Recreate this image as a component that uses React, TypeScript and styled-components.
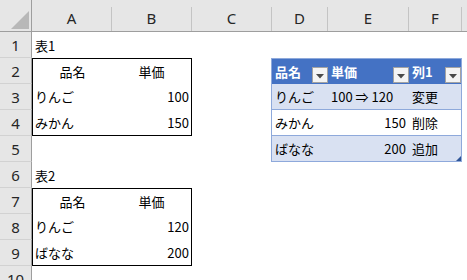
import React from "react";
import styled, { createGlobalStyle } from "styled-components";

const Global = createGlobalStyle`
  html, body { margin: 0; padding: 0; background: #fff; }
  body { font-family: "Noto Sans CJK JP", "Noto Sans", sans-serif; font-size: 13px; color: #000; }
`;

const Sheet = styled.div`
  display: grid;
  grid-template-columns: 32px 80px 80px 80px 56px 81px 53px 1fr;
  grid-template-rows: 32px repeat(10, 26px);
  width: 467px;
  height: 280px;
  overflow: hidden;
  background: #fff;
`;

const Corner = styled.div`
  grid-row: 1;
  grid-column: 1;
  background: #e6e6e6;
  border-right: 1px solid #9e9e9e;
  border-bottom: 1px solid #9e9e9e;
  display: flex;
  align-items: flex-end;
  justify-content: flex-end;
  padding: 0 2px 2px 0;
`;

const ColHead = styled.div`
  grid-row: 1;
  background: #e6e6e6;
  border-bottom: 1px solid #9e9e9e;
  padding-top: 7px;
  display: flex;
`;

const ColLabel = styled.div<{ $last?: boolean }>`
  flex: 1;
  display: flex;
  align-items: center;
  justify-content: center;
  border-right: ${(p) => (p.$last ? "none" : "1px solid #c4c4c4")};
  font-family: "Noto Sans", "Liberation Sans", sans-serif;
  font-size: 15px;
  color: #262626;
  padding-bottom: 2px;
`;

const RowHead = styled.div<{ $row: number }>`
  grid-row: ${(p) => p.$row};
  grid-column: 1;
  background: #e6e6e6;
  border-right: 1px solid #9e9e9e;
  border-bottom: 1px solid #d2d2d2;
  display: flex;
  align-items: center;
  justify-content: center;
  font-family: "Noto Sans", "Liberation Sans", sans-serif;
  font-size: 15px;
  color: #262626;
`;

const Cell = styled.div<{ $row: number; $col: number }>`
  grid-row: ${(p) => p.$row};
  grid-column: ${(p) => p.$col};
  display: flex;
  align-items: center;
  padding: 0 3px;
  white-space: nowrap;
`;

const BoxTable = styled.div<{ $row: number }>`
  grid-row: ${(p) => p.$row} / span 3;
  grid-column: 2 / span 2;
  border: 1px solid #000;
  display: grid;
  grid-template-columns: 79px 1fr;
  grid-template-rows: repeat(3, 1fr);
`;

const BoxCell = styled.div<{ $align: "left" | "center" | "right" }>`
  display: flex;
  align-items: center;
  justify-content: ${(p) =>
    p.$align === "left" ? "flex-start" : p.$align === "right" ? "flex-end" : "center"};
  padding: 0 2px;
  white-space: nowrap;
`;

const ListTable = styled.div`
  grid-row: 3 / span 4;
  grid-column: 5 / span 3;
  margin-left: -1px;
  border: 1px solid #8ea9db;
  display: flex;
  flex-direction: column;
  position: relative;
`;

const ListRow = styled.div<{ $kind: "head" | "band" | "plain"; $line?: boolean }>`
  flex: 1;
  display: grid;
  grid-template-columns: 56px 81px 1fr;
  background: ${(p) => (p.$kind === "head" ? "#4472c4" : p.$kind === "band" ? "#d9e1f2" : "#fff")};
  border-top: ${(p) => (p.$line ? "1px solid #8ea9db" : "none")};
`;

const HeadCell = styled.div`
  display: flex;
  align-items: center;
  justify-content: space-between;
  padding-left: 3px;
  color: #fff;
  font-weight: 700;
  white-space: nowrap;
`;

const FilterButton = styled.div`
  align-self: flex-end;
  width: 16px;
  height: 16px;
  margin-bottom: 1px;
  box-sizing: border-box;
  background: #f4f4f4;
  border: 1px solid #a3a3a3;
  display: flex;
  align-items: center;
  justify-content: center;
  padding-top: 3px;
`;

const ListCell = styled.div<{ $align: "left" | "right" }>`
  display: flex;
  align-items: center;
  justify-content: ${(p) => (p.$align === "right" ? "flex-end" : "flex-start")};
  padding: 0 3px;
  white-space: nowrap;
`;

const ResizeHandle = styled.svg`
  position: absolute;
  right: 0;
  bottom: 0;
`;

const Filter = () => (
  <FilterButton>
    <svg width="8" height="5" viewBox="0 0 8 5">
      <polygon points="0,0 8,0 4,4.5" fill="#4a4a4a" />
    </svg>
  </FilterButton>
);

const cols = ["A", "B", "C", "D", "E", "F", ""];

export default function App() {
  return (
    <>
      <Global />
      <Sheet>
        <Corner>
          <svg width="18" height="18" viewBox="0 0 18 18">
            <polygon points="18,0 18,18 0,18" fill="#b8b8b8" />
          </svg>
        </Corner>
        {cols.map((c, i) => (
          <ColHead key={i}>
            <ColLabel $last={i === cols.length - 1}>{c}</ColLabel>
          </ColHead>
        ))}
        {Array.from({ length: 10 }, (_, i) => (
          <RowHead key={i} $row={i + 2}>
            {i + 1}
          </RowHead>
        ))}

        <Cell $row={2} $col={2}>表1</Cell>
        <BoxTable $row={3}>
          <BoxCell $align="center">品名</BoxCell>
          <BoxCell $align="center">単価</BoxCell>
          <BoxCell $align="left">りんご</BoxCell>
          <BoxCell $align="right">100</BoxCell>
          <BoxCell $align="left">みかん</BoxCell>
          <BoxCell $align="right">150</BoxCell>
        </BoxTable>

        <Cell $row={7} $col={2}>表2</Cell>
        <BoxTable $row={8}>
          <BoxCell $align="center">品名</BoxCell>
          <BoxCell $align="center">単価</BoxCell>
          <BoxCell $align="left">りんご</BoxCell>
          <BoxCell $align="right">120</BoxCell>
          <BoxCell $align="left">ばなな</BoxCell>
          <BoxCell $align="right">200</BoxCell>
        </BoxTable>

        <ListTable>
          <ListRow $kind="head">
            <HeadCell>品名<Filter /></HeadCell>
            <HeadCell>単価<Filter /></HeadCell>
            <HeadCell>列1<Filter /></HeadCell>
          </ListRow>
          <ListRow $kind="band">
            <ListCell $align="left">りんご</ListCell>
            <ListCell $align="left">100 ⇒ 120</ListCell>
            <ListCell $align="left">変更</ListCell>
          </ListRow>
          <ListRow $kind="plain" $line>
            <ListCell $align="left">みかん</ListCell>
            <ListCell $align="right">150</ListCell>
            <ListCell $align="left">削除</ListCell>
          </ListRow>
          <ListRow $kind="band" $line>
            <ListCell $align="left">ばなな</ListCell>
            <ListCell $align="right">200</ListCell>
            <ListCell $align="left">追加</ListCell>
          </ListRow>
          <ResizeHandle width="5" height="5" viewBox="0 0 5 5">
            <polygon points="5,0 5,5 0,5" fill="#2f5597" />
          </ResizeHandle>
        </ListTable>
      </Sheet>
    </>
  );
}
